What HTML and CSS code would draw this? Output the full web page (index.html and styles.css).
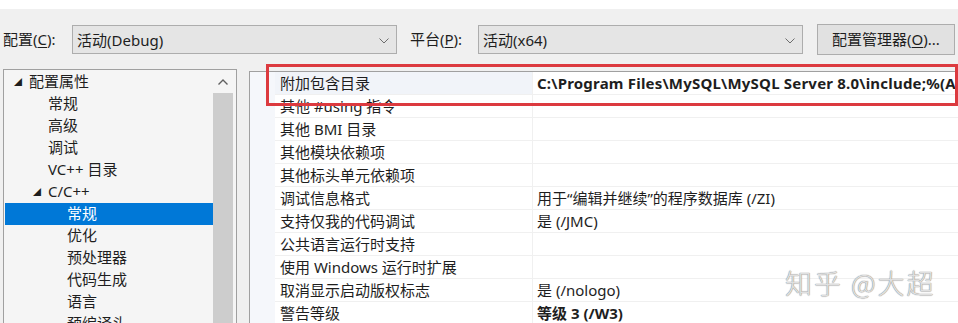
FILE: index.html
```html
<!DOCTYPE html>
<html lang="zh-CN">
<head>
<meta charset="utf-8">
<title>属性页</title>
<link rel="stylesheet" href="styles.css">
</head>
<body>
<div class="topstrip"></div>
<div class="toolbar">
  <span class="label label-config">配置(<u>C</u>):</span>
  <div class="select"><span>活动(Debug)</span><svg class="chev" width="10" height="6" viewBox="0 0 10 6"><path d="M0.5 0.5 L5 5 L9.5 0.5" fill="none" stroke="#6d6d6d" stroke-width="1"/></svg></div>
  <span class="label label-platform">平台(<u>P</u>):</span>
  <div class="select"><span>活动(x64)</span><svg class="chev" width="10" height="6" viewBox="0 0 10 6"><path d="M0.5 0.5 L5 5 L9.5 0.5" fill="none" stroke="#6d6d6d" stroke-width="1"/></svg></div>
  <button class="btn">配置管理器(<u>O</u>)...</button>
</div>
<div class="main">
  <div class="tree-panel">
    <ul class="tree">
      <li class="node lvl0"><span class="tri">◢</span>配置属性</li>
      <li class="node lvl1">常规</li>
      <li class="node lvl1">高级</li>
      <li class="node lvl1">调试</li>
      <li class="node lvl1">VC++ 目录</li>
      <li class="node lvl1 open"><span class="tri">◢</span>C/C++</li>
      <li class="node lvl2 selected">常规</li>
      <li class="node lvl2">优化</li>
      <li class="node lvl2">预处理器</li>
      <li class="node lvl2">代码生成</li>
      <li class="node lvl2">语言</li>
      <li class="node lvl2">预编译头</li>
    </ul>
    <div class="vscroll">
      <div class="arrow"><svg width="10" height="6" viewBox="0 0 10 6"><path d="M0.5 5.5 L5 1 L9.5 5.5" fill="none" stroke="#606060" stroke-width="1.4"/></svg></div>
      <div class="thumb"></div>
    </div>
  </div>
  <div class="grid-panel">
    <div class="gutter"></div>
    <div class="grid">
      <div class="row sel"><div class="name">附加包含目录</div><div class="val bold">C:\Program Files\MySQL\MySQL Server 8.0\include;%(AdditionalIncludeDirectories)</div></div>
      <div class="row"><div class="name">其他 #using 指令</div><div class="val"></div></div>
      <div class="row"><div class="name">其他 BMI 目录</div><div class="val"></div></div>
      <div class="row"><div class="name">其他模块依赖项</div><div class="val"></div></div>
      <div class="row"><div class="name">其他标头单元依赖项</div><div class="val"></div></div>
      <div class="row"><div class="name">调试信息格式</div><div class="val">用于“编辑并继续”的程序数据库 (/ZI)</div></div>
      <div class="row"><div class="name">支持仅我的代码调试</div><div class="val">是 (/JMC)</div></div>
      <div class="row"><div class="name">公共语言运行时支持</div><div class="val"></div></div>
      <div class="row"><div class="name">使用 Windows 运行时扩展</div><div class="val"></div></div>
      <div class="row"><div class="name">取消显示启动版权标志</div><div class="val">是 (/nologo)</div></div>
      <div class="row"><div class="name">警告等级</div><div class="val bold">等级 3 (/W3)</div></div>
    </div>
  </div>
</div>
<div class="redbox"></div>
<div class="watermark">知乎 @大超</div>
</body>
</html>
```

FILE: styles.css
```css
* { box-sizing: border-box; }
html, body { margin: 0; padding: 0; }
body {
  width: 958px;
  height: 323px;
  overflow: hidden;
  background: #f0f0f0;
  font-family: "Noto Sans", "Noto Sans CJK SC", sans-serif;
  font-size: 15px;
  color: #1e1e1e;
  position: relative;
}
.topstrip { height: 9px; background: #ffffff; }

.toolbar {
  height: 60px;
  display: flex;
  align-items: center;
  padding-left: 3px;
}
.label { line-height: 20px; white-space: nowrap; }
.label u { text-decoration: underline; text-underline-offset: 2px; }
.label-config { width: 69px; }
.label-platform { width: 68px; margin-left: 13px; }
.select {
  width: 325px;
  height: 29px;
  border: 1px solid #adadad;
  background: #e5e5e5;
  display: flex;
  align-items: center;
  justify-content: space-between;
  padding: 0 7px 0 4px;
  margin-top: 1px;
}
.select span { line-height: 20px; }
.chev { margin-top: 2px; }
.btn {
  margin-left: 14px;
  width: 138px;
  height: 31px;
  border: 1px solid #adadad;
  background: #e1e1e1;
  font: inherit;
  color: #1e1e1e;
  padding: 0;
  line-height: 20px;
}
.btn u { text-underline-offset: 2px; }

.main {
  display: flex;
  padding-left: 3px;
  gap: 12px;
  height: 254px;
}
.tree-panel {
  width: 234px;
  border: 1px solid #a0a0a0;
  border-bottom: none;
  background: #f5f5f5;
  display: flex;
  padding-top: 1px;
}
.tree {
  list-style: none;
  margin: 0;
  padding: 0 0 0 1px;
  width: 209px;
  flex: none;
}
.node {
  height: 22px;
  line-height: 21px;
  white-space: nowrap;
  position: relative;
}
.lvl0 { padding-left: 24px; }
.lvl1 { padding-left: 43px; }
.lvl2 { padding-left: 62px; }
.tri {
  position: absolute;
  font-size: 8px;
  line-height: 22px;
  color: #1e1e1e;
}
.lvl0 .tri { left: 9px; }
.lvl1 .tri { left: 28px; }
.selected { background: #0078d7; color: #ffffff; }
.vscroll {
  width: 20px;
  display: flex;
  flex-direction: column;
  align-items: stretch;
}
.arrow {
  height: 22px;
  display: flex;
  align-items: center;
  justify-content: center;
}
.thumb { flex: 1; background: #cdcdcd; }

.grid-panel {
  flex: 1;
  margin-top: 2px;
  border-left: 1px solid #a0a0a0;
  border-top: 1px solid #a0a0a0;
  background: #f5f7fb;
  display: flex;
  overflow: hidden;
}
.gutter { width: 25px; flex: none; }
.grid { flex: 1; background: #ffffff; }
.row {
  display: flex;
  height: 23px;
  border-bottom: 1px solid #f0f0f0;
  white-space: nowrap;
}
.name {
  width: 258px;
  flex: none;
  padding-left: 5px;
  line-height: 22px;
  border-right: 1px solid #f0f0f0;
  overflow: hidden;
}
.row.sel .name { background: #f1f4f9; }
.val {
  padding-left: 4px;
  line-height: 22px;
  overflow: hidden;
}
.bold { font-weight: 700; }
.row.sel .val { font-size: 15px; letter-spacing: 0.2px; }

.redbox {
  position: absolute;
  left: 266px;
  top: 64px;
  width: 692px;
  height: 42px;
  border: 3px solid #dc3a3f;
  pointer-events: none;
}
.watermark {
  position: absolute;
  left: 785px;
  top: 265px;
  font-family: "Noto Sans CJK SC", sans-serif;
  font-weight: 300;
  font-size: 27px;
  line-height: 36px;
  color: rgba(236, 236, 236, 0.9);
  text-shadow: 0 0 1px #8a8a8a, 0 0 1px #8a8a8a;
  letter-spacing: 2px;
}
```
